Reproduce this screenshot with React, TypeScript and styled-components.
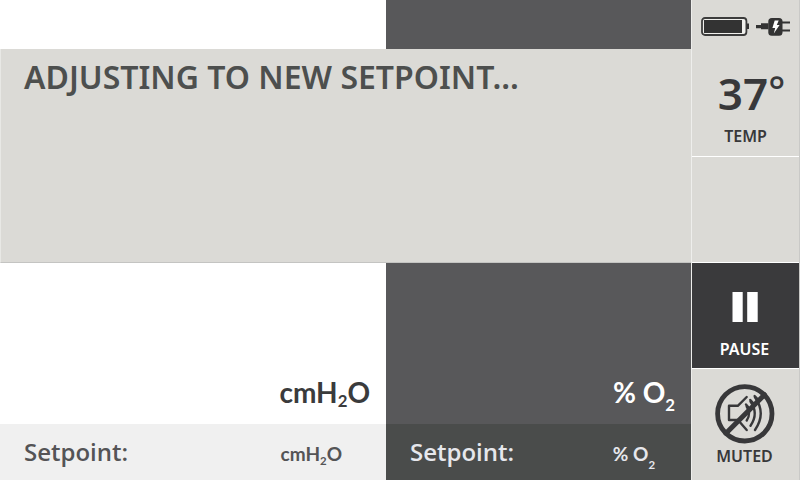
import React from "react";
import styled, { createGlobalStyle } from "styled-components";

const GlobalStyle = createGlobalStyle`
  *, *::before, *::after { box-sizing: border-box; }
  body {
    margin: 0;
    background: #fff;
    font-family: "Noto Sans", "Open Sans", sans-serif;
    font-weight: 600;
  }
`;

const Screen = styled.div`
  display: flex;
  min-height: 100vh;
`;

const Monitor = styled.main`
  flex: 1;
  min-width: 0;
  display: grid;
  grid-template-columns: 386fr 305fr;
  grid-template-rows: 49px 214px 1fr 56px;
`;

type Tone = "light" | "dark";

const Strip = styled.div<{ $tone: Tone }>`
  background: ${(p) => (p.$tone === "dark" ? "#58585a" : "#fff")};
`;

const Banner = styled.section`
  grid-column: 1 / -1;
  padding: 4px 23px;
  background: #dbdad6;
  border-left: 1px solid #e8e8e5;
  border-bottom: 1px solid #c4c4c2;
`;

const BannerTitle = styled.h1`
  margin: 0;
  font-weight: 600;
  font-size: 32px;
  line-height: 48px;
  white-space: nowrap;
  color: #4d4f4e;
`;

const Reading = styled.section<{ $tone: Tone }>`
  display: flex;
  align-items: flex-end;
  justify-content: flex-end;
  padding: 12px 16px;
  background: ${(p) => (p.$tone === "dark" ? "#58585a" : "#fff")};
  color: ${(p) => (p.$tone === "dark" ? "#fff" : "#3a3b3c")};
`;

const Unit = styled.span<{ $small?: boolean }>`
  font-family: Lato, sans-serif;
  font-weight: 700;
  font-size: ${(p) => (p.$small ? 19 : 28)}px;
  line-height: 40px;
  white-space: nowrap;
`;

const Sub = styled.sub<{ $low?: boolean }>`
  vertical-align: ${(p) => (p.$low ? "-8px" : "-4px")};
  line-height: 0;
  font-size: 60%;
`;

const Setpoint = styled.section<{ $tone: Tone }>`
  display: flex;
  align-items: baseline;
  justify-content: space-between;
  padding: 8px ${(p) => (p.$tone === "dark" ? 36 : 44)}px 8px 24px;
  background: ${(p) => (p.$tone === "dark" ? "#4a4c4b" : "#f0f0f0")};
  color: ${(p) => (p.$tone === "dark" ? "#e6e7ec" : "#545456")};
`;

const SetpointLabel = styled.span`
  font-family: "Open Sans", sans-serif;
  font-size: 24px;
  line-height: 40px;
`;

const Sidebar = styled.aside`
  flex: none;
  width: 109px;
  display: grid;
  grid-template-rows: 157px 106px 106px 1fr;
  border-left: 1px solid #eeeeec;
  border-right: 1px solid #c9c9c7;
  background: #dbdad6;
  color: #38383a;
`;

const Cell = styled.div`
  display: flex;
  flex-direction: column;
  align-items: center;
  border-bottom: 1px solid #fff;
`;

const StatusIcons = styled.div`
  display: flex;
  align-items: center;
  gap: 7px;
  height: 53px;
`;

const Temperature = styled.output`
  display: flex;
  align-items: flex-start;
  padding-left: 12px;
  margin-bottom: -9px;
  font-size: 44px;
  line-height: 80px;
`;

const Degree = styled.span`
  font-size: 40px;
  font-weight: 500;
  line-height: 74px;
`;

const Caption = styled.span`
  font-size: 16px;
  line-height: 24px;
`;

const Action = styled.button<{ $tone: Tone }>`
  display: flex;
  flex-direction: column;
  align-items: center;
  justify-content: flex-start;
  gap: ${(p) => (p.$tone === "dark" ? 15 : 0)}px;
  padding: ${(p) => (p.$tone === "dark" ? 29 : 15)}px 2px 0 0;
  border: 0;
  border-bottom: ${(p) => (p.$tone === "dark" ? "1px solid #fff" : "0")};
  background: ${(p) => (p.$tone === "dark" ? "#3a3a3c" : "transparent")};
  color: ${(p) => (p.$tone === "dark" ? "#fff" : "inherit")};
  font: inherit;
  cursor: pointer;
`;

const BatteryIcon = () => (
  <svg width="48" height="19" viewBox="0 0 48 19" role="img" aria-label="Battery">
    <rect x="1" y="1" width="44.4" height="17" rx="3" fill="#f0f0ed" stroke="#3c3c3c" strokeWidth="1.8" />
    <rect x="3" y="3" width="38" height="13" fill="#333" />
    <rect x="46" y="6.5" width="2" height="5.5" fill="#333" />
  </svg>
);

const PlugIcon = () => (
  <svg width="34" height="18" viewBox="0 0 34 18" role="img" aria-label="Plugged in">
    <path d="M0 7H5V5.2H12.5V11.3H5V10.2H0Z" fill="#333" />
    <rect x="12.3" y="0" width="14.2" height="17.7" rx="3.5" fill="#333" />
    <path d="M26 3.5H34V5.5H26ZM26 11.5H34V13.5H26Z" fill="#333" />
    <path d="M18.7 2.5H22.7L20.8 7H23.6L17.8 15.5L19.2 10H16.4Z" fill="#fff" />
  </svg>
);

const PauseIcon = () => (
  <svg width="26" height="30" viewBox="0 0 26 30" aria-hidden="true">
    <path d="M0.5 0H10.7V30H0.5ZM15.2 0H25.7V30H15.2Z" fill="#fff" />
  </svg>
);

const MutedIcon = () => (
  <svg
    width="60"
    height="60"
    viewBox="0 0 60 60"
    fill="none"
    stroke="#38383a"
    strokeLinecap="round"
    strokeLinejoin="round"
    aria-hidden="true"
  >
    <circle cx="29.8" cy="29.8" r="27.2" strokeWidth="4.8" />
    <g strokeWidth="2.4">
      <path d="M31.7 13L22.8 21.8H14V36H23L31.7 46" />
      <path d="M31.7 22.5Q36.4 29.5 31.7 36.5" />
      <path d="M35.5 17.5Q44 29.5 35.5 41.7" />
      <path d="M40 13.2Q51.5 29.5 40 46" />
      <path d="M31 20.5L34 24M35.3 16L38.5 19.5M39.6 12L43 15.5" />
    </g>
    <path d="M11 49.3L49.5 10.7" strokeWidth="5" />
  </svg>
);

export default function App() {
  return (
    <>
      <GlobalStyle />
      <Screen>
        <Monitor>
          <Strip $tone="light" />
          <Strip $tone="dark" />
          <Banner role="status">
            <BannerTitle>ADJUSTING TO NEW SETPOINT...</BannerTitle>
          </Banner>
          <Reading $tone="light">
            <Unit>cmH<Sub>2</Sub>O</Unit>
          </Reading>
          <Reading $tone="dark">
            <Unit>% O<Sub $low>2</Sub></Unit>
          </Reading>
          <Setpoint $tone="light">
            <SetpointLabel>Setpoint:</SetpointLabel>
            <Unit $small>cmH<Sub>2</Sub>O</Unit>
          </Setpoint>
          <Setpoint $tone="dark">
            <SetpointLabel>Setpoint:</SetpointLabel>
            <Unit $small>% O<Sub $low>2</Sub></Unit>
          </Setpoint>
        </Monitor>
        <Sidebar>
          <Cell>
            <StatusIcons>
              <BatteryIcon />
              <PlugIcon />
            </StatusIcons>
            <Temperature>37<Degree>°</Degree></Temperature>
            <Caption>TEMP</Caption>
          </Cell>
          <Cell />
          <Action $tone="dark">
            <PauseIcon />
            <Caption>PAUSE</Caption>
          </Action>
          <Action $tone="light">
            <MutedIcon />
            <Caption>MUTED</Caption>
          </Action>
        </Sidebar>
      </Screen>
    </>
  );
}
